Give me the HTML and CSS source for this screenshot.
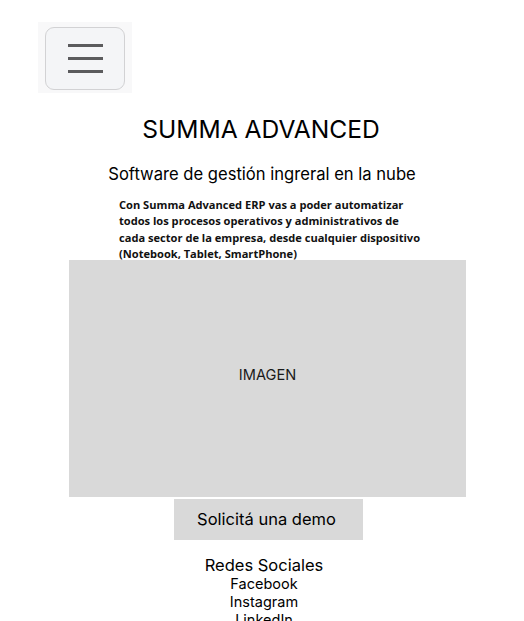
FILE: index.html
```html
<!DOCTYPE html>
<html lang="es">
<head>
<meta charset="utf-8">
<title>Summa Advanced</title>
<link rel="stylesheet" href="styles.css">
</head>
<body>
<header class="top">
  <div class="menu-wrap">
    <button class="menu-btn" aria-label="Menú">
      <span class="bar"></span>
      <span class="bar"></span>
      <span class="bar"></span>
    </button>
  </div>
</header>
<main class="main">
  <h1 class="title">SUMMA ADVANCED</h1>
  <h2 class="subtitle">Software de gestión ingreral en la nube</h2>
  <p class="desc">Con Summa Advanced ERP vas a poder automatizar<br>todos los procesos operativos y administrativos de<br>cada sector de la empresa, desde cualquier dispositivo<br>(Notebook, Tablet, SmartPhone)</p>
  <div class="image">IMAGEN</div>
  <a class="demo" href="#">Solicitá una demo</a>
  <section class="social">
    <h3 class="social-title">Redes Sociales</h3>
    <ul class="social-list">
      <li>Facebook</li>
      <li>Instagram</li>
      <li>LinkedIn</li>
    </ul>
  </section>
</main>
</body>
</html>
```

FILE: styles.css
```css
* { box-sizing: border-box; }
html, body { margin: 0; padding: 0; background: #ffffff; }
body {
  font-family: Inter, "Noto Sans", sans-serif;
  color: #000;
  width: 524px;
  height: 621px;
  overflow: hidden;
}
.top {
  padding: 22px 0 0 38px;
}
.menu-wrap {
  width: 94px;
  height: 71px;
  background: #f8f8f9;
  padding: 5px 0 0 7px;
}
.menu-btn {
  width: 80px;
  height: 63px;
  border: 1px solid #d2d2d4;
  border-radius: 9px;
  background: #f4f5f7;
  display: flex;
  flex-direction: column;
  align-items: center;
  justify-content: center;
  gap: 10px;
  padding: 0 0 1px 0;
}
.bar {
  display: block;
  width: 35px;
  height: 3px;
  background: #5b5b5d;
}
.main {
  display: flex;
  flex-direction: column;
  align-items: center;
}
.title {
  margin: 22px 0 0 0;
  font-size: 24.6px;
  line-height: 29px;
  font-weight: 400;
  padding-right: 2px;
}
.subtitle {
  margin: 21px 0 0 0;
  font-size: 16.6px;
  line-height: 19px;
  font-weight: 400;
}
.desc {
  align-self: flex-start;
  margin: 13px 0 -3px 119px;
  font-family: "Open Sans", sans-serif;
  font-weight: 700;
  font-size: 11.1px;
  line-height: 16.4px;
  color: #111;
}
.image {
  width: 397px;
  height: 237px;
  margin-left: 11px;
  background: #d9d9d9;
  display: flex;
  align-items: center;
  justify-content: center;
  padding-bottom: 7px;
  font-size: 14.6px;
  color: #1a1a1a;
}
.demo {
  margin: 2px 0 0 13px;
  width: 189px;
  height: 41px;
  background: #d9d9d9;
  display: flex;
  align-items: center;
  justify-content: center;
  padding-right: 4px;
  font-size: 16.5px;
  color: #000;
  text-decoration: none;
}
.social {
  margin-top: 16px;
  display: flex;
  flex-direction: column;
  align-items: center;
  padding-left: 4px;
}
.social-title {
  margin: 0;
  font-size: 16.5px;
  line-height: 19px;
  font-weight: 400;
}
.social-list {
  list-style: none;
  margin: 0;
  padding: 0;
  text-align: center;
  font-size: 14.5px;
  line-height: 18px;
}
```
